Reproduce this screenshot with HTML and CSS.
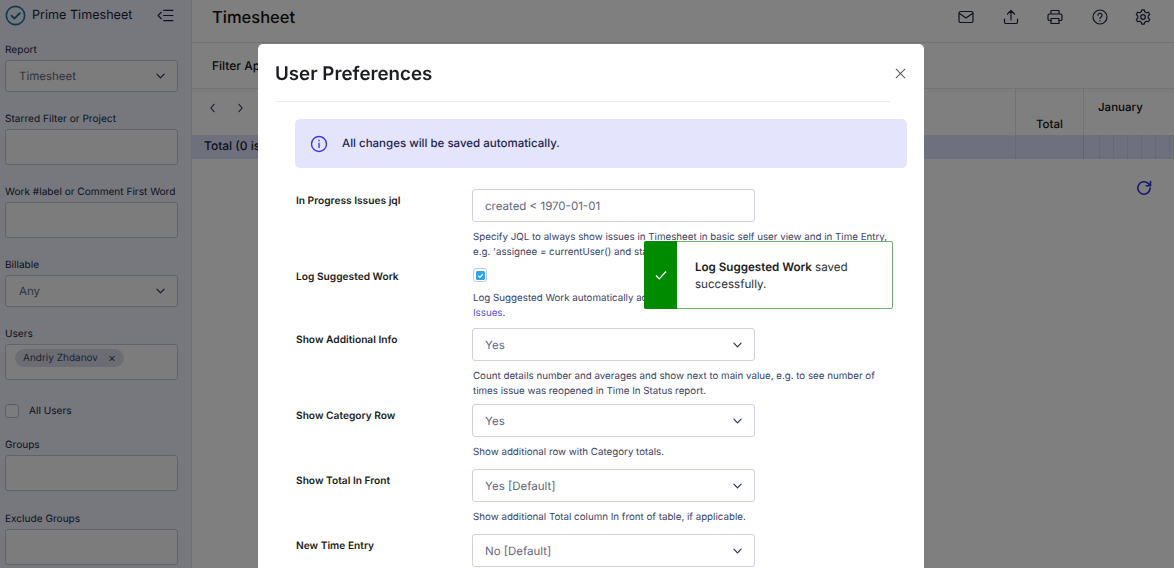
FILE: index.html
```html
<!DOCTYPE html>
<html lang="en">
<head>
<meta charset="utf-8">
<title>Prime Timesheet</title>
<link rel="stylesheet" href="styles.css">
</head>
<body>
<div class="app">
  <aside class="sidebar">
    <div class="brand">
      <svg class="brand-logo" viewBox="0 0 22 22" fill="none"><circle cx="11" cy="11" r="9.6" stroke="#1f6f9c" stroke-width="1.7"/><path d="M6.8 11.3l3 2.9 5.6-5.6" stroke="#1f6f9c" stroke-width="2" stroke-linecap="round" stroke-linejoin="round"/></svg>
      <span class="brand-name">Prime Timesheet</span>
      <svg class="brand-toggle" viewBox="0 0 18 14" fill="none" stroke="#1c2440" stroke-width="1.2" stroke-linecap="round" stroke-linejoin="round"><path d="M4.5 3.5L1 7l3.500 3.500M7 1.500h10M7 7h10M7 12.500h10"/></svg>
    </div>
    <div class="field first"><label class="field-label">Report</label>
      <div class="side-select"><span>Timesheet</span><svg class="chev" viewBox="0 0 10 6" fill="none"><path d="M1 1l4 4 4-4"/></svg></div></div>
    <div class="field"><label class="field-label">Starred Filter or Project</label><div class="side-input"></div></div>
    <div class="field"><label class="field-label">Work #label or Comment First Word</label><div class="side-input"></div></div>
    <div class="field"><label class="field-label">Billable</label>
      <div class="side-select"><span>Any</span><svg class="chev" viewBox="0 0 10 6" fill="none"><path d="M1 1l4 4 4-4"/></svg></div></div>
    <div class="field"><label class="field-label">Users</label>
      <div class="side-input"><span class="chip">Andriy Zhdanov<span class="chip-x">×</span></span></div></div>
    <div class="all-users"><span class="side-check"></span><span>All Users</span></div>
    <div class="field groups"><label class="field-label">Groups</label><div class="side-input"></div></div>
    <div class="field"><label class="field-label">Exclude Groups</label><div class="side-input"></div></div>
  </aside>
  <main class="main">
    <header class="topbar">
      <h1 class="page-title">Timesheet</h1>
      <div class="tools">
        <svg class="tool" viewBox="0 0 18 18"><rect x="2" y="3.500" width="14" height="11" rx="1.500"/><path d="M2.500 5.500L9 10l6.500-4.500"/></svg>
        <svg class="tool" viewBox="0 0 18 18"><path d="M9 12V2.500M5.500 6L9 2.500 12.500 6M2.500 11v3a1.500 1.500 0 0 0 1.500 1.500h10a1.500 1.500 0 0 0 1.500-1.500v-3"/></svg>
        <svg class="tool" viewBox="0 0 18 18"><path d="M5 6V2.500h8V6M5 12.500H3.500A1.500 1.500 0 0 1 2 11V7.500A1.500 1.500 0 0 1 3.500 6h11A1.500 1.500 0 0 1 16 7.500V11a1.500 1.500 0 0 1-1.500 1.500H13"/><rect x="5" y="10.500" width="8" height="5"/></svg>
        <svg class="tool" viewBox="0 0 18 18"><circle cx="9" cy="9" r="7"/><path d="M7 7.200a2 2 0 1 1 3 1.800c-.7.400-1 .8-1 1.500M9 12.600v.3"/></svg>
        <svg class="tool" viewBox="0 0 18 18"><circle cx="9" cy="9" r="2.300"/><path d="M7.700 1.800h2.600l.4 2 1.700 1 2-.6 1.300 2.300-1.500 1.400v2.200l1.500 1.400-1.300 2.300-2-.6-1.700 1-.4 2H7.700l-.4-2-1.700-1-2 .6-1.300-2.300 1.500-1.400V7.900L2.300 6.500l1.300-2.300 2 .6 1.700-1z"/></svg>
      </div>
    </header>
    <div class="filterbar">Filter Applied</div>
    <div class="table-head">
      <div class="pager">
        <svg class="pager-icon" viewBox="0 0 8 12"><path d="M6 1.500L2 6l4 4.500"/></svg>
        <svg class="pager-icon" viewBox="0 0 8 12"><path d="M2 1.500L6 6l-4 4.500"/></svg>
      </div>
      <div class="col-total">Total</div>
      <div class="col-month">January</div>
    </div>
    <div class="total-row">
      <div class="total-label">Total (0 issues)</div>
      <div class="total-cell"></div>
      <div class="days">
        <i></i><i></i><i></i><i></i><i></i><i></i><i></i>
      </div>
    </div>
    <div class="refresh-row">
      <svg class="refresh" viewBox="0 0 18 18"><path d="M15.200 9a6.200 6.200 0 1 1-1.800-4.400L15.500 6.700M15.500 2.500v4.200h-4.200"/></svg>
    </div>
  </main>
</div>

<div class="overlay"></div>

<section class="modal">
  <div class="modal-head">
    <h2 class="modal-title">User Preferences</h2>
    <svg class="modal-close" viewBox="0 0 12 12"><path d="M1 1l10 10M11 1L1 11"/></svg>
  </div>
  <div class="modal-body">
    <div class="notice">
      <svg class="notice-icon" viewBox="0 0 18 18"><circle cx="9" cy="9" r="7.500"/><path d="M9 8.200v4.300M9 5.300v.4"/></svg>
      <span class="notice-text">All changes will be saved automatically.</span>
    </div>
    <div class="pref">
      <div class="pref-label">In Progress Issues jql</div>
      <div class="pref-control">
        <div class="box">created &lt; 1970-01-01</div>
        <p class="help">Specify JQL to always show issues in Timesheet in basic self user view and in Time Entry,<br>e.g. 'assignee = currentUser() and status = "In Progress"'.</p>
      </div>
    </div>
    <div class="pref pref-check">
      <div class="pref-label">Log Suggested Work</div>
      <div class="pref-control">
        <span class="check-wrap"><span class="check"><svg viewBox="0 0 10 10" fill="none"><path d="M2.500 5.200l1.800 1.800 3.300-3.600"/></svg></span></span>
        <p class="help">Log Suggested Work automatically adds suggested issues to Timesheet and Time<br><a class="help-link">Issues</a>.</p>
      </div>
    </div>
    <div class="pref pref-select">
      <div class="pref-label">Show Additional Info</div>
      <div class="pref-control">
        <div class="box box-select"><span>Yes</span><svg class="chev" viewBox="0 0 10 6" fill="none"><path d="M1 1l4 4 4-4"/></svg></div>
        <p class="help">Count details number and averages and show next to main value, e.g. to see number of<br>times issue was reopened in Time In Status report.</p>
      </div>
    </div>
    <div class="pref pref-select">
      <div class="pref-label">Show Category Row</div>
      <div class="pref-control">
        <div class="box box-select"><span>Yes</span><svg class="chev" viewBox="0 0 10 6" fill="none"><path d="M1 1l4 4 4-4"/></svg></div>
        <p class="help help-single">Show additional row with Category totals.</p>
      </div>
    </div>
    <div class="pref pref-select">
      <div class="pref-label">Show Total In Front</div>
      <div class="pref-control">
        <div class="box box-select"><span>Yes [Default]</span><svg class="chev" viewBox="0 0 10 6" fill="none"><path d="M1 1l4 4 4-4"/></svg></div>
        <p class="help help-single">Show additional Total column In front of table, if applicable.</p>
      </div>
    </div>
    <div class="pref pref-select">
      <div class="pref-label">New Time Entry</div>
      <div class="pref-control">
        <div class="box box-select"><span>No [Default]</span><svg class="chev" viewBox="0 0 10 6" fill="none"><path d="M1 1l4 4 4-4"/></svg></div>
      </div>
    </div>
  </div>
</section>

<div class="toast">
  <div class="toast-side"><svg viewBox="0 0 14 14" fill="none"><path d="M2 7.500l3.300 3.300L12 3.500"/></svg></div>
  <div class="toast-text"><b>Log Suggested Work</b> saved successfully.</div>
</div>
</body>
</html>
```
FILE: styles.css
```css
* { box-sizing: border-box; }
html, body { margin: 0; height: 100%; overflow: hidden; }
body { font-family: Inter, "Liberation Sans", sans-serif; color: #172033; background: #fff; text-rendering: geometricPrecision; }

.app { display: flex; height: 568px; overflow: hidden; }

.sidebar { width: 192px; flex: none; padding: 0 14px 0 5px; background: #ecf0fb; border-right: 1px solid #dfe1e6; }
.brand { display: flex; align-items: center; height: 30px; }
.brand-logo { width: 21px; height: 21px; flex: none; }
.brand-name { width: 118px; margin-left: 6px; font-size: 12.600px; color: #1c2440; white-space: nowrap; }
.brand-toggle { width: 17px; height: 13px; margin-left: 7px; flex: none; }

.field { margin-top: 22px; }
.field.first { margin-top: 15px; }
.field.groups { margin-top: 22px; }
.field.groups + .field { margin-top: 22.500px; }
.field-label { display: block; height: 11px; margin-bottom: 4px; font-size: 10.100px; line-height: 11px; color: #1c2440; white-space: nowrap; }
.side-input, .side-select { width: 173px; border: 1px solid #c3c6d4; border-radius: 3px; background: #f8f8fa; }
.side-input { display: flex; align-items: flex-start; height: 36px; padding: 4px 9px; }
.side-select { display: flex; align-items: center; justify-content: space-between; height: 32px; padding: 0 12px 0 13px; font-size: 11.500px; color: #5f6680; }
.chev { width: 9px; height: 6px; flex: none; stroke: #273050; stroke-width: 1.300; stroke-linecap: round; stroke-linejoin: round; }
.chip { display: flex; align-items: center; height: 18px; padding: 0 8px; border-radius: 9px; background: #d9dbe8; font-size: 10px; color: #3c4466; white-space: nowrap; }
.chip-x { margin-left: 10px; font-size: 12px; line-height: 12px; }
.all-users { display: flex; align-items: center; gap: 10px; margin-top: 24px; font-size: 10.100px; color: #1c2440; }
.side-check { width: 14px; height: 14px; border: 1px solid #b9bcca; border-radius: 3px; background: #f7f8fc; }

.main { flex: 1; min-width: 0; }
.topbar { display: flex; align-items: center; justify-content: space-between; height: 43px; padding: 0 22px 8px 20px; border-bottom: 1px solid #e4e4e4; }
.page-title { margin: 0; font-size: 16.500px; font-weight: 500; color: #111; }
.tools { display: flex; gap: 26.500px; }
.tool { width: 18px; height: 18px; fill: none; stroke: #1c2440; stroke-width: 1.200; stroke-linecap: round; stroke-linejoin: round; }
.tool:last-child { margin-left: -1px; }
.filterbar { height: 46px; padding: 15px 20px 0; border-bottom: 1px solid #e4e4e4; font-size: 12px; font-weight: 500; color: #111; }
.table-head { display: flex; height: 46px; }
.pager { flex: none; width: 823px; display: flex; gap: 21px; padding: 14px 0 0 17px; }
.pager-icon { width: 7px; height: 10px; fill: none; stroke: #1c2440; stroke-width: 1.300; stroke-linecap: round; stroke-linejoin: round; }
.col-total { flex: none; width: 69px; padding-top: 28px; text-align: center; border-left: 1px solid #e4e4e4; border-right: 1px solid #e4e4e4; font-size: 11.500px; font-weight: 500; color: #111; }
.col-month { flex: 1; padding: 11px 0 0 14px; font-size: 11.500px; font-weight: 500; color: #111; }
.total-row { display: flex; height: 24px; background: #dfe1fb; }
.total-label { flex: none; width: 823px; padding: 3px 12px; font-size: 12px; font-weight: 500; color: #172033; }
.total-cell { flex: none; width: 69px; border-left: 1px solid #d0d2ea; border-right: 1px solid #c4c6e0; }
.days { flex: 1; display: flex; padding-left: 1px; }
.days i { width: 14px; flex: none; border-right: 1px solid #d0d2ea; }
.days i:first-child { width: 15px; }
.refresh-row { display: flex; justify-content: flex-end; padding: 20px 21px 0 0; }
.refresh { width: 18px; height: 18px; fill: none; stroke: #3333d6; stroke-width: 1.600; stroke-linecap: round; stroke-linejoin: round; }

.overlay { position: fixed; inset: 0; background: rgba(0, 0, 0, .5); }

.modal { position: fixed; left: 258px; top: 44px; width: 666px; height: 560px; background: #fff; border-radius: 5px; }
.modal-head { position: relative; height: 58px; margin: 0 34px 0 17px; border-bottom: 1px solid #ebebeb; padding-top: 17px; }
.modal-title { margin: 0; font-size: 18.750px; line-height: 25px; font-weight: 600; color: #1b1d22; }
.modal-close { position: absolute; right: -16px; top: 24px; width: 11px; height: 11px; fill: none; stroke: #555; stroke-width: 1.100; }
.modal-body { padding: 17px 17px 0 37px; }
.notice { display: flex; align-items: center; gap: 14px; height: 49px; padding-left: 15px; background: #e4e5fd; border-radius: 5px; font-size: 11.500px; font-weight: 500; color: #1c2552; }
.notice-text { margin-top: -1px; }
.notice-icon { width: 18px; height: 18px; flex: none; fill: none; stroke: #3a3ae0; stroke-width: 1.400; stroke-linecap: round; }

.pref { display: flex; }
.notice + .pref { margin-top: 21px; }
.pref-label { flex: none; width: 177px; padding: 5px 0 0 1px; font-size: 10.200px; line-height: 14px; font-weight: 600; color: #1b1d22; white-space: nowrap; }
.pref-control { flex: 1; min-width: 0; }
.pref-check { margin-top: 8px; }
.pref-check .pref-label { padding-top: 2px; }
.pref-select { margin-top: 5px; }
.pref-check + .pref-select { margin-top: 7px; }
.box { width: 283px; height: 33px; padding: 0 12px; display: flex; align-items: center; border: 1px solid #cfd0e2; border-radius: 3px; background: #fff; font-size: 11.500px; color: #5f6680; }
.box-select { justify-content: space-between; }
.help { margin: 9px 0 0 1px; font-size: 9.750px; line-height: 14.500px; color: #3b4468; white-space: nowrap; }
.help-single { padding-bottom: 3.500px; }
.help-link { color: #5555ea; }
.check-wrap { display: flex; align-items: center; justify-content: center; width: 14px; height: 14px; border: 1px solid #c3c5dc; border-radius: 3px; margin-left: 1px; }
.check { display: flex; width: 9px; height: 9px; border-radius: 1.500px; background: #2aa7ec; }
.check svg { width: 9px; height: 9px; stroke: #fff; stroke-width: 1.300; }
.pref-check .help { margin-top: 10px; }

.toast { position: fixed; left: 644px; top: 241px; display: flex; width: 249px; height: 68px; background: #fff; border: 1px solid #6fae6f; border-radius: 2px; }
.toast-side { display: flex; flex: none; align-items: center; justify-content: center; width: 33px; margin: -1px 0 -1px -1px; background: #008a00; border-radius: 2px 0 0 2px; }
.toast-side svg { width: 14px; height: 14px; stroke: #fff; stroke-width: 1.200; }
.toast-text { padding: 17px 24px 0 18px; font-size: 11.600px; line-height: 17px; color: #2b2f38; }
.toast-text b { font-weight: 600; color: #1b1d22; }
```
